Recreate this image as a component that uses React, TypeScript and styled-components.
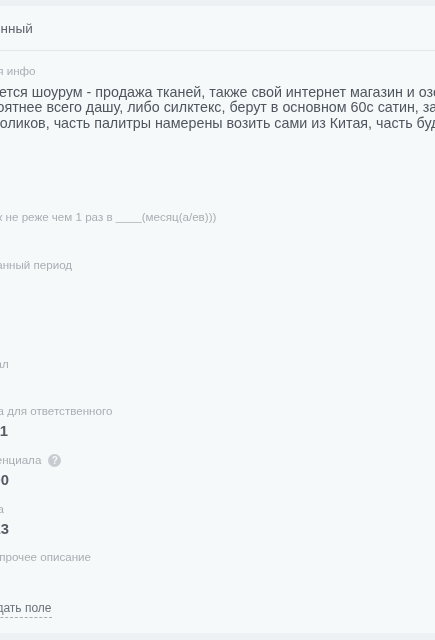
import React from 'react';
import styled, { createGlobalStyle } from 'styled-components';

interface FieldProps {
  id: number;
  label: string;
  value?: string;
  hint?: boolean;
  height: number;
}

const GlobalStyle = createGlobalStyle`
  html, body {
    margin: 0;
    padding: 0;
    background-color: #eef1f3;
  }
`;

const Page = styled.div`
  width: 435px;
  height: 640px;
  overflow: hidden;
  padding: 6px 0 7px;
  box-sizing: border-box;
  font-family: 'Liberation Sans', Arial, sans-serif;
`;

const Panel = styled.div`
  height: 627px;
  background-color: #f5f9fa;
  overflow: hidden;
`;

const Inner = styled.div`
  width: 900px;
  margin-left: -24px;
  filter: blur(0.6px);
`;

const Header = styled.div`
  height: 44px;
  line-height: 45px;
  font-size: 13.5px;
  color: #5d646c;
  border-bottom: 1px solid #e3e7e9;
`;

const Fields = styled.div`
  display: flex;
  flex-direction: column;
  padding-top: 14px;
`;

const Field = styled.div<{ $height: number }>`
  height: ${(p) => p.$height}px;
`;

const Label = styled.div`
  display: flex;
  align-items: center;
  height: 12px;
  font-size: 11.6px;
  line-height: 12px;
  white-space: pre;
  color: #a9aeb3;
`;

const Hint = styled.span`
  width: 13px;
  height: 13px;
  margin-left: 7px;
  border-radius: 50%;
  background-color: #c6ccd1;
  color: #f5f9fa;
  font-size: 10px;
  font-weight: 700;
  line-height: 13px;
  text-align: center;
`;

const Value = styled.div`
  margin-top: 6px;
  font-size: 14.8px;
  line-height: 16px;
  font-weight: 700;
  color: #555c64;
`;

const Description = styled.div`
  margin: 8px 0 0 -5px;
  font-size: 14.3px;
  line-height: 15.4px;
  white-space: nowrap;
  color: #4f565e;
`;

const AddField = styled.span`
  display: inline-block;
  font-size: 12px;
  line-height: 17px;
  color: #6a7178;
  border-bottom: 1px dashed #a8aeb4;
`;

const FIELDS: FieldProps[] = [
  { id: 1, label: 'Срок не реже чем 1 раз в ____(месяц(а/ев)))', height: 48 },
  { id: 2, label: 'Заданный период', height: 99 },
  { id: 3, label: 'Канал', height: 47 },
  { id: 4, label: 'Сила для ответственного', value: '1101', height: 49 },
  { id: 5, label: 'Потенциала', value: '1000', hint: true, height: 49 },
  { id: 6, label: 'Цена', value: '1013', height: 48 },
  { id: 7, label: 'Все прочее описание', height: 47 },
];

const App = () => {
  return (
    <Page>
      <GlobalStyle />
      <Panel>
        <Inner>
          <Header>Длинный</Header>
          <Fields>
            <Field $height={146}>
              <Label>Иная инфо</Label>
              <Description>
                Имеется шоурум - продажа тканей, также свой интернет магазин и озон
                <br />
                Вероятнее всего дашу, либо силктекс, берут в основном 60с сатин, закупают
                <br />
                Из роликов, часть палитры намерены возить сами из Китая, часть будет здесь
              </Description>
            </Field>
            {FIELDS.map((item) => (
              <Field key={item.id} $height={item.height}>
                <Label>
                  {item.label}
                  {item.hint && <Hint>?</Hint>}
                </Label>
                {item.value && <Value>{item.value}</Value>}
              </Field>
            ))}
            <div>
              <AddField>Создать поле</AddField>
            </div>
          </Fields>
        </Inner>
      </Panel>
    </Page>
  );
};

export default App;
